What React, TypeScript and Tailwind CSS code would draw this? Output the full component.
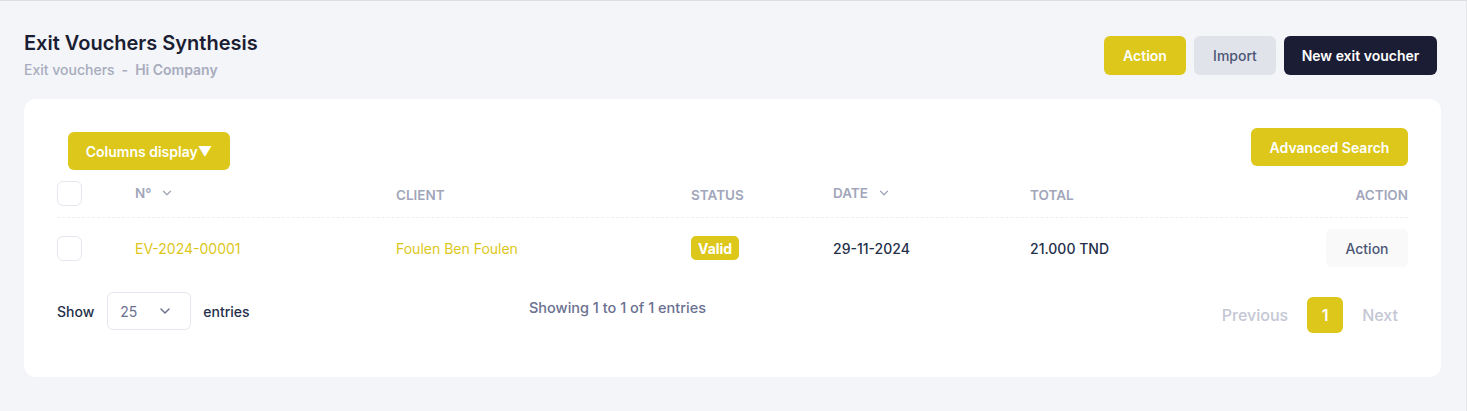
import React from "react";

const Chevron = ({ className = "", size = 13 }: { className?: string; size?: number }) => (
  <svg className={className} width={size} height={size} viewBox="0 0 24 24" fill="none" stroke="currentColor" strokeWidth="2.2" strokeLinecap="round" strokeLinejoin="round">
    <path d="M6 9l6 6 6-6" />
  </svg>
);

export default function App() {
  return (
    <div
      className="h-[411px] w-full bg-[#f3f5f9] border-t border-t-[#dcdee3] border-r border-r-[#e4e6ea] overflow-hidden"
      style={{ fontFamily: "Inter, 'Noto Sans', sans-serif" }}
    >
      {/* Header */}
      <div className="flex items-start justify-between pl-6 pr-[29px] pt-[29px]">
        <div>
          <h1 className="text-[20px] leading-[26px] font-semibold text-[#1b1e33]">Exit Vouchers Synthesis</h1>
          <div className="mt-[3px] flex items-center text-[14px] font-medium text-[#a8acbd]">
            <span>Exit vouchers</span>
            <span className="mx-[7px] font-semibold">-</span>
            <span className="font-semibold">Hi Company</span>
          </div>
        </div>
        <div className="flex items-center gap-2 mt-[6px]">
          <button className="h-[39px] w-[82px] rounded-md bg-[#dcc71a] text-white text-[14px] font-semibold">Action</button>
          <button className="h-[39px] w-[82px] rounded-md bg-[#e1e3ea] text-[#4b5675] text-[14px] font-medium">Import</button>
          <button className="h-[39px] w-[153px] rounded-md bg-[#1b1d34] text-white text-[14px] font-semibold">New exit voucher</button>
        </div>
      </div>

      {/* Card */}
      <div className="ml-6 mr-[25px] mt-[19px] h-[278px] rounded-xl bg-white px-[33px] pt-[29px]">
        <div className="flex items-start justify-between">
          <button className="ml-[11px] mt-[4px] h-[38px] w-[162px] rounded-md bg-[#dcc71a] text-white text-[14px] font-semibold">
            Columns display▼
          </button>
          <button className="h-[38px] w-[157px] rounded-md bg-[#dcc71a] text-white text-[14px] font-semibold">
            Advanced Search
          </button>
        </div>

        {/* Table header */}
        <div className="grid grid-cols-[78px_261px_295px_142px_197px_1fr_auto] items-center h-[48px] pt-[3px] border-b border-dashed border-[#eceef2] text-[13.5px] font-semibold uppercase text-[#a1a6ba]">
          <div className="-mt-[4px]">
            <div className="h-[25px] w-[25px] rounded-md border border-[#e6e7ee]" />
          </div>
          <div className="flex items-center gap-[9px] -mt-[4px] normal-case">
            <span>N°</span>
            <Chevron size={14} />
          </div>
          <div>Client</div>
          <div>Status</div>
          <div className="flex items-center gap-[9px] -mt-[4px]">
            <span>Date</span>
            <Chevron size={14} />
          </div>
          <div>Total</div>
          <div className="text-right">Action</div>
        </div>

        {/* Row */}
        <div className="grid grid-cols-[78px_261px_295px_142px_197px_1fr_auto] items-center h-[60px] text-[14px]">
          <div>
            <div className="h-[25px] w-[25px] rounded-md border border-[#e6e7ee]" />
          </div>
          <div className="text-[#dcc71a]">EV-2024-00001</div>
          <div className="text-[#dcc71a]">Foulen Ben Foulen</div>
          <div>
            <span className="inline-flex h-[24px] items-center rounded-[5px] bg-[#dcc71a] px-[7px] text-[14px] font-bold text-white">Valid</span>
          </div>
          <div className="font-medium text-[#252f4a]">29-11-2024</div>
          <div className="font-medium text-[#252f4a]">21.000 TND</div>
          <div className="flex justify-end">
            <button className="h-[38px] w-[82px] rounded-md bg-[#f9f9f9] text-[14px] font-medium text-[#4b5675]">Action</button>
          </div>
        </div>

        {/* Footer */}
        <div className="mt-[14px] flex items-start">
          <div className="flex items-center text-[14px] font-medium text-[#252f4a] w-[400px]">
            <span>Show</span>
            <div className="ml-[13px] flex h-[38px] w-[84px] items-center justify-between rounded-md border border-[#e6e7ee] pl-[12px] pr-[17px] text-[#6b7191] font-normal">
              <span>25</span>
              <Chevron size={16} className="text-[#6b7191]" />
            </div>
            <span className="ml-[12px]">entries</span>
          </div>
          <div className="flex-1 flex justify-start pl-[72px] pt-[5px] text-[14.5px] font-medium text-[#6b7191]">
            Showing 1 to 1 of 1 entries
          </div>
          <div className="flex items-center mt-[5px] text-[16px] font-medium text-[#c4c7d4]">
            <span className="mr-[19px]">Previous</span>
            <span className="flex h-[36px] w-[36px] items-center justify-center rounded-md bg-[#dcc71a] text-white font-semibold">1</span>
            <span className="ml-[19px] mr-[10px]">Next</span>
          </div>
        </div>
      </div>
    </div>
  );
}
